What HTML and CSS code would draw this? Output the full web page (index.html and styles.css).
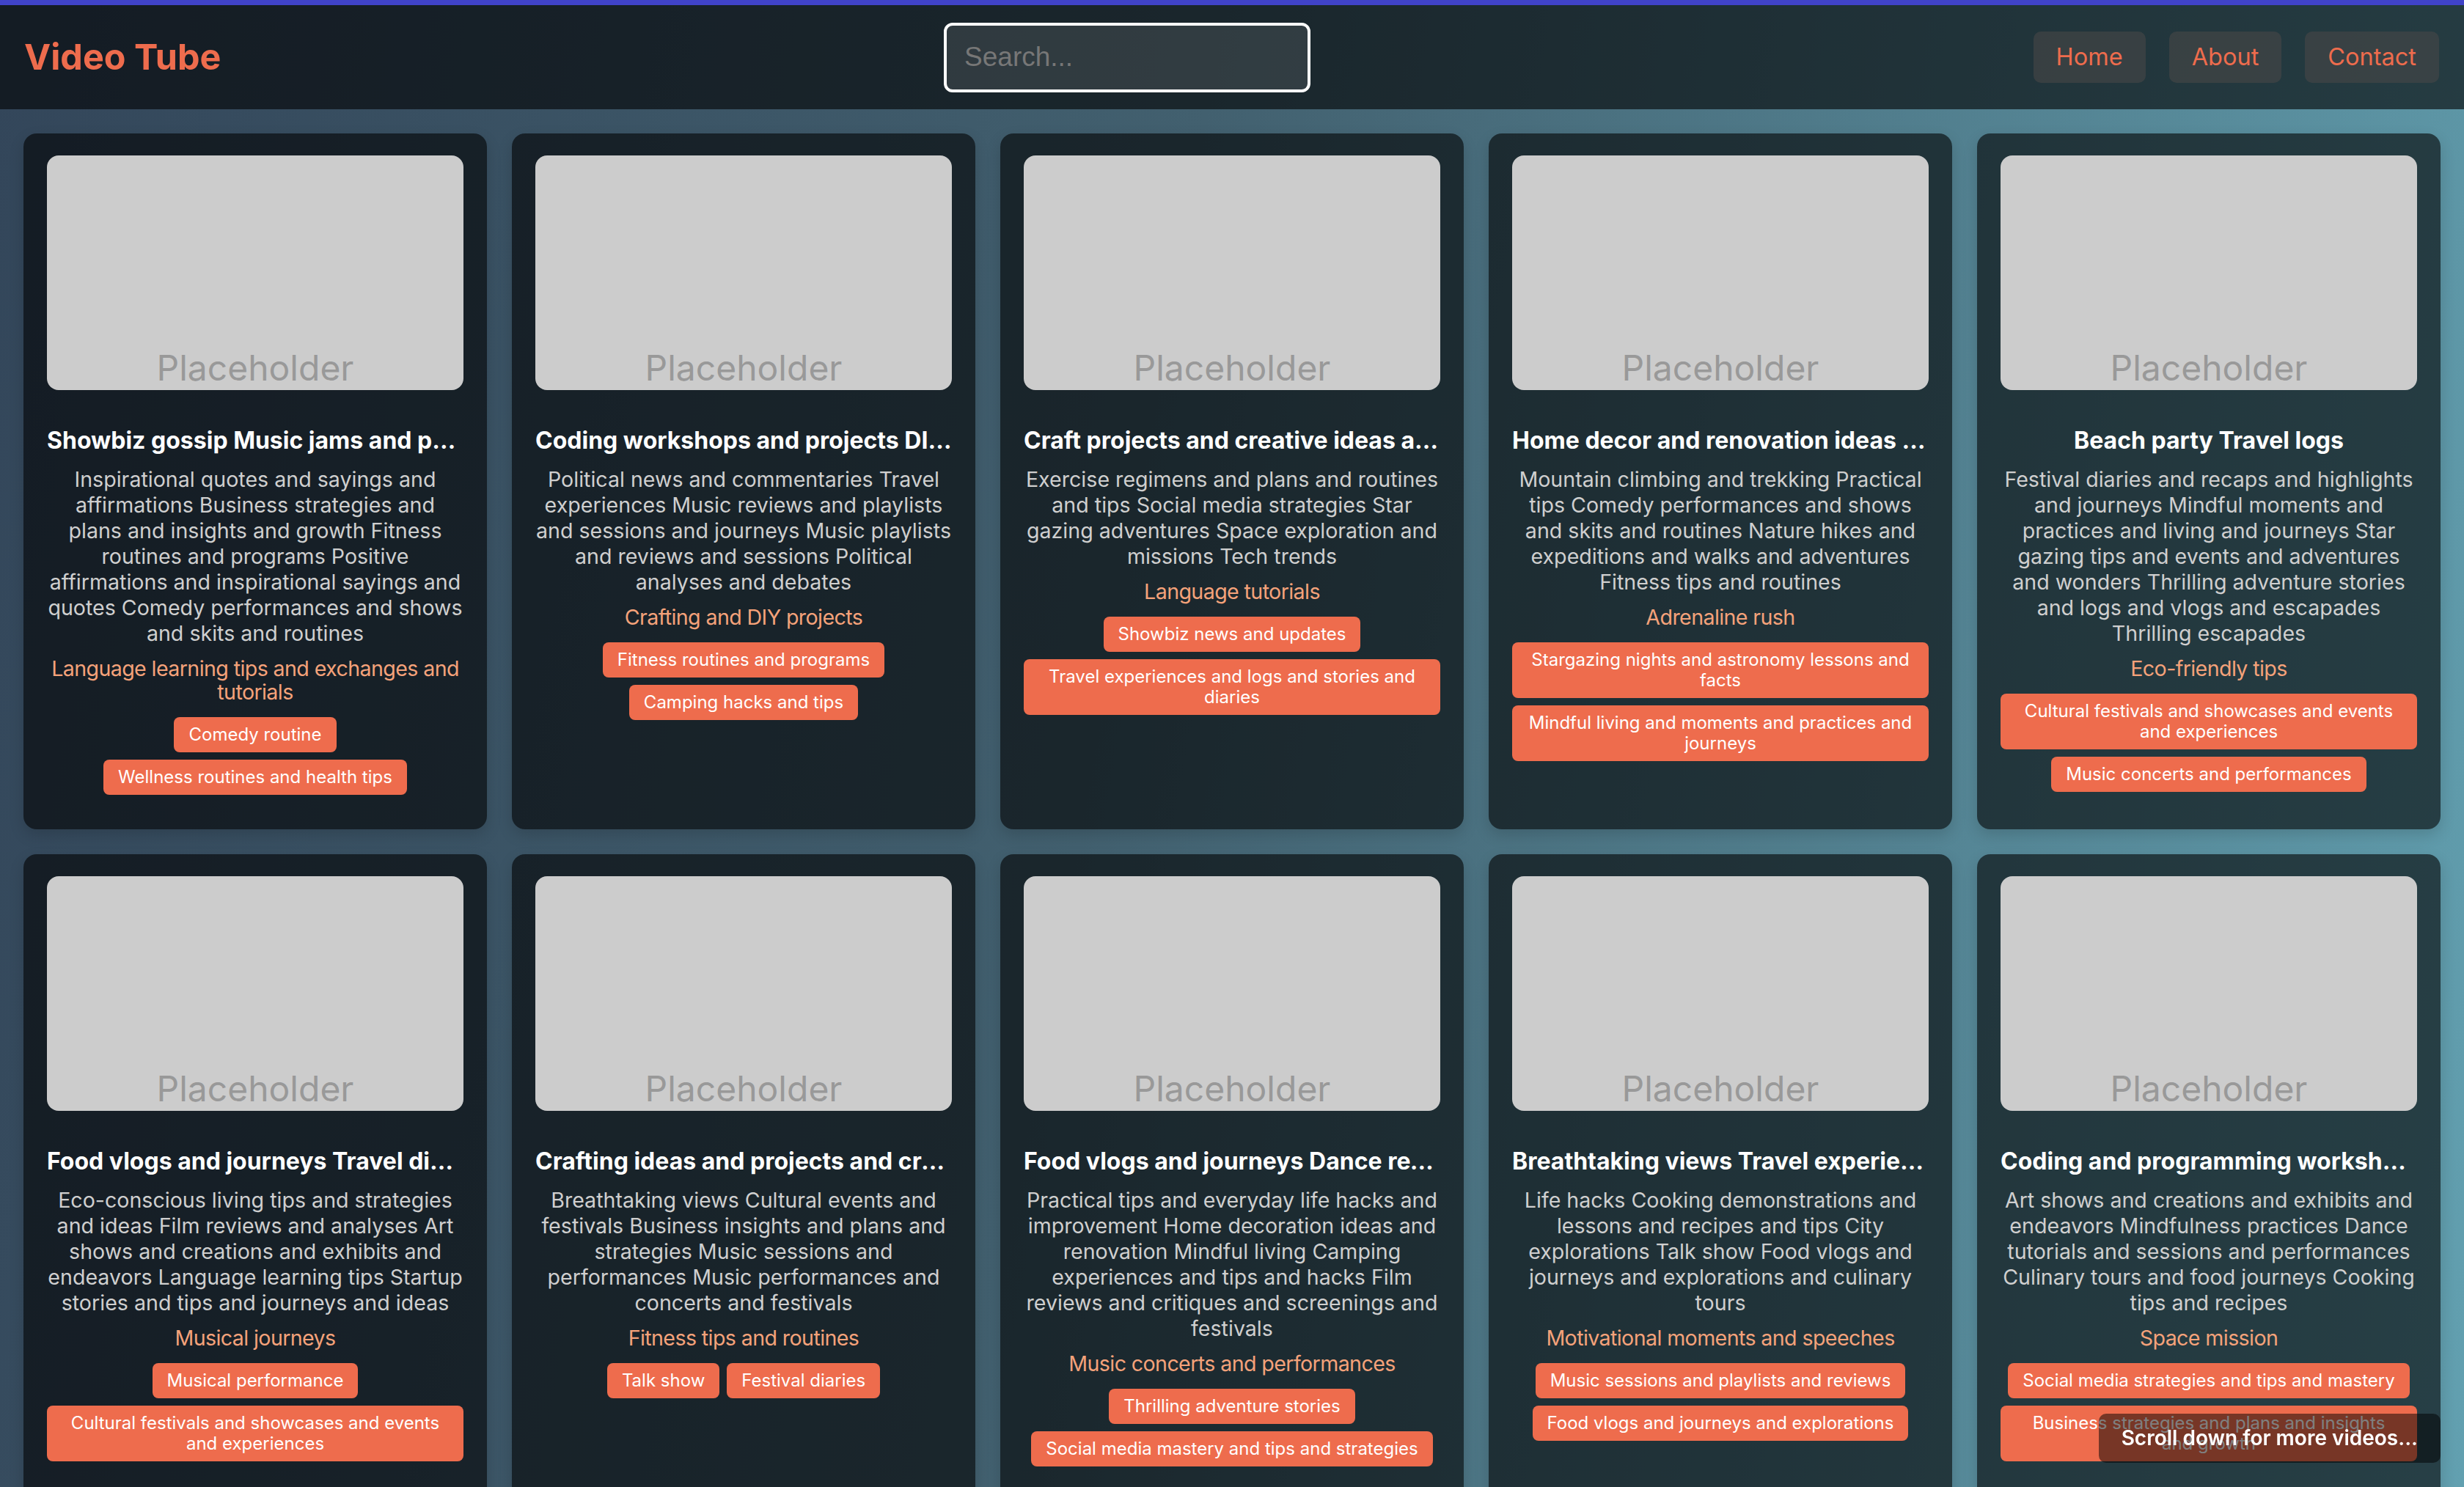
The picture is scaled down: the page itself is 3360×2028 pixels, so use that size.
FILE: index.html
```html
<!DOCTYPE html>
<html lang="en">
<head>
<meta charset="utf-8">
<title>Video Tube</title>
<link rel="stylesheet" href="styles.css">
</head>
<body>
<div class="topbar"></div>
<header class="header">
  <div class="logo">Video Tube</div>
  <input class="search" type="text" placeholder="Search...">
  <nav class="nav">
    <a class="nav-link" href="#">Home</a>
    <a class="nav-link" href="#">About</a>
    <a class="nav-link" href="#">Contact</a>
  </nav>
</header>
<main class="grid">
  <article class="card">
    <div class="thumb">Placeholder</div>
    <h3 class="title">Showbiz gossip Music jams and performances</h3>
    <p class="desc">Inspirational quotes and sayings and affirmations Business strategies and plans and insights and growth Fitness routines and programs Positive affirmations and inspirational sayings and quotes Comedy performances and shows and skits and routines</p>
    <p class="cat">Language learning tips and exchanges and tutorials</p>
    <div class="tags"><span class="tag">Comedy routine</span><span class="tag">Wellness routines and health tips</span></div>
  </article>
  <article class="card">
    <div class="thumb">Placeholder</div>
    <h3 class="title">Coding workshops and projects DIY crafts and tutorials</h3>
    <p class="desc">Political news and commentaries Travel experiences Music reviews and playlists and sessions and journeys Music playlists and reviews and sessions Political analyses and debates</p>
    <p class="cat">Crafting and DIY projects</p>
    <div class="tags"><span class="tag">Fitness routines and programs</span><span class="tag">Camping hacks and tips</span></div>
  </article>
  <article class="card">
    <div class="thumb">Placeholder</div>
    <h3 class="title">Craft projects and creative ideas and tutorials</h3>
    <p class="desc">Exercise regimens and plans and routines and tips Social media strategies Star gazing adventures Space exploration and missions Tech trends</p>
    <p class="cat">Language tutorials</p>
    <div class="tags"><span class="tag">Showbiz news and updates</span><span class="tag">Travel experiences and logs and stories and diaries</span></div>
  </article>
  <article class="card">
    <div class="thumb">Placeholder</div>
    <h3 class="title">Home decor and renovation ideas and projects</h3>
    <p class="desc">Mountain climbing and trekking Practical tips Comedy performances and shows and skits and routines Nature hikes and expeditions and walks and adventures Fitness tips and routines</p>
    <p class="cat">Adrenaline rush</p>
    <div class="tags"><span class="tag">Stargazing nights and astronomy lessons and facts</span><span class="tag">Mindful living and moments and practices and journeys</span></div>
  </article>
  <article class="card">
    <div class="thumb">Placeholder</div>
    <h3 class="title">Beach party Travel logs</h3>
    <p class="desc">Festival diaries and recaps and highlights and journeys Mindful moments and practices and living and journeys Star gazing tips and events and adventures and wonders Thrilling adventure stories and logs and vlogs and escapades Thrilling escapades</p>
    <p class="cat">Eco-friendly tips</p>
    <div class="tags"><span class="tag">Cultural festivals and showcases and events and experiences</span><span class="tag">Music concerts and performances</span></div>
  </article>
  <article class="card">
    <div class="thumb">Placeholder</div>
    <h3 class="title">Food vlogs and journeys Travel diaries</h3>
    <p class="desc">Eco-conscious living tips and strategies and ideas Film reviews and analyses Art shows and creations and exhibits and endeavors Language learning tips Startup stories and tips and journeys and ideas</p>
    <p class="cat">Musical journeys</p>
    <div class="tags"><span class="tag">Musical performance</span><span class="tag">Cultural festivals and showcases and events and experiences</span></div>
  </article>
  <article class="card">
    <div class="thumb">Placeholder</div>
    <h3 class="title">Crafting ideas and projects and creations</h3>
    <p class="desc">Breathtaking views Cultural events and festivals Business insights and plans and strategies Music sessions and performances Music performances and concerts and festivals</p>
    <p class="cat">Fitness tips and routines</p>
    <div class="tags"><span class="tag">Talk show</span><span class="tag">Festival diaries</span></div>
  </article>
  <article class="card">
    <div class="thumb">Placeholder</div>
    <h3 class="title">Food vlogs and journeys Dance reviews</h3>
    <p class="desc">Practical tips and everyday life hacks and improvement Home decoration ideas and renovation Mindful living Camping experiences and tips and hacks Film reviews and critiques and screenings and festivals</p>
    <p class="cat">Music concerts and performances</p>
    <div class="tags"><span class="tag">Thrilling adventure stories</span><span class="tag">Social media mastery and tips and strategies</span></div>
  </article>
  <article class="card">
    <div class="thumb">Placeholder</div>
    <h3 class="title">Breathtaking views Travel experiences</h3>
    <p class="desc">Life hacks Cooking demonstrations and lessons and recipes and tips City explorations Talk show Food vlogs and journeys and explorations and culinary tours</p>
    <p class="cat">Motivational moments and speeches</p>
    <div class="tags"><span class="tag">Music sessions and playlists and reviews</span><span class="tag">Food vlogs and journeys and explorations</span></div>
  </article>
  <article class="card">
    <div class="thumb">Placeholder</div>
    <h3 class="title">Coding and programming workshops and tutorials</h3>
    <p class="desc">Art shows and creations and exhibits and endeavors Mindfulness practices Dance tutorials and sessions and performances Culinary tours and food journeys Cooking tips and recipes</p>
    <p class="cat">Space mission</p>
    <div class="tags"><span class="tag">Social media strategies and tips and mastery</span><span class="tag">Business strategies and plans and insights and growth</span></div>
  </article>
</main>
<div class="toast">Scroll down for more videos...</div>
</body>
</html>
```

FILE: styles.css
```css
* { box-sizing: border-box; }

html {
  background: linear-gradient(100deg, #33465a 0%, #42606f 45%, #62a0b0 100%);
  background-attachment: fixed;
  min-height: 100%;
}

body {
  margin: 0;
  font-family: Inter, "Noto Sans", "Liberation Sans", sans-serif;
  color: #fff;
  min-height: 100vh;
}

.topbar {
  height: 7px;
  background: #4043c9;
}

.header {
  display: flex;
  align-items: center;
  justify-content: space-between;
  height: 142px;
  padding: 0 34px 0 33px;
  background: rgba(0, 0, 0, 0.6);
}

.logo {
  font-size: 48.5px;
  font-weight: 700;
  color: #ee6c4d;
  line-height: 1.2;
}

.search {
  width: 500px;
  height: 95px;
  border: 4px solid #fff;
  border-radius: 12px;
  background: rgba(255, 255, 255, 0.1);
  padding: 0 24px;
  font-family: "Liberation Sans", Arial, sans-serif;
  font-size: 37px;
  color: #ddd;
  outline: none;
}

.search::placeholder { color: #777; }

.nav {
  display: flex;
  gap: 32px;
}

.nav-link {
  display: block;
  padding: 15px 31px;
  line-height: 40px;
  font-size: 32.5px;
  color: #ee6c4d;
  text-decoration: none;
  border-radius: 10px;
  background: rgba(72, 72, 72, 0.6);
}

.grid {
  display: grid;
  grid-template-columns: repeat(5, 1fr);
  gap: 34px;
  padding: 33px 32px;
}

.card {
  background: rgba(0, 0, 0, 0.6);
  border-radius: 18px;
  padding: 30px 32px 32px;
  text-align: center;
  box-shadow: 0 8px 20px rgba(0, 0, 0, 0.15);
  min-width: 0;
}

.thumb {
  height: 320px;
  border-radius: 16px;
  background: #ccc;
  color: #999;
  font-size: 48px;
  line-height: 48px;
  display: flex;
  align-items: flex-end;
  justify-content: center;
  padding-bottom: 6px;
  margin-bottom: 48px;
}

.title {
  margin: 0 0 15px;
  font-size: 32px;
  line-height: 41px;
  font-weight: 700;
  white-space: nowrap;
  overflow: hidden;
  text-overflow: ellipsis;
}

.desc {
  margin: 0 0 15px;
  font-size: 28.6px;
  line-height: 35px;
  color: #cfcfcf;
}

.cat {
  margin: 0 0 18px;
  font-size: 28.6px;
  line-height: 32px;
  letter-spacing: -0.6px;
  color: #f4a27a;
}

.tags {
  display: flex;
  flex-wrap: wrap;
  justify-content: center;
  gap: 10px;
  margin-bottom: 15px;
}

.tag {
  max-width: 100%;
  background: #ee6c4d;
  color: #fff;
  font-size: 24px;
  line-height: 28px;
  padding: 10px 20px;
  border-radius: 8px;
}

.toast {
  position: fixed;
  right: 32px;
  bottom: 33px;
  padding: 15px 31px;
  background: rgba(0, 0, 0, 0.5);
  color: #fff;
  font-size: 28px;
  line-height: 37px;
  font-weight: 600;
  border-radius: 10px;
}
```
